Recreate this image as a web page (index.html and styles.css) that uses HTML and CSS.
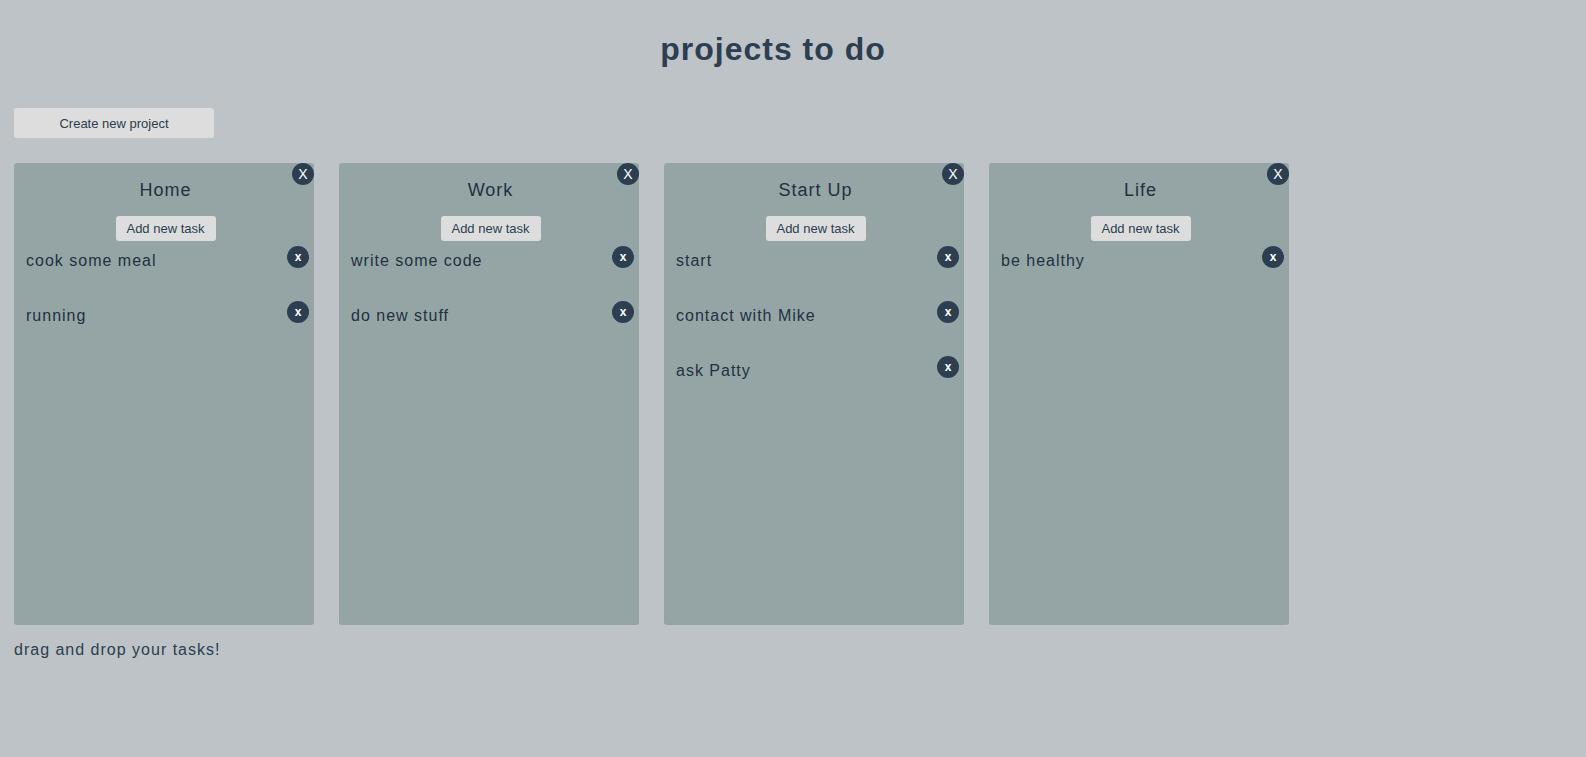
FILE: index.html
```html
<!DOCTYPE html>
<html lang="en">
<head>
<meta charset="utf-8">
<title>projects to do</title>
<link rel="stylesheet" href="styles.css">
</head>
<body>
<h1 class="title">projects to do</h1>
<main>
<button class="create">Create new project</button>
<div class="board">
<section class="column"><button class="close">X</button><h2 class="name">Home</h2><button class="add">Add new task</button>
<ul class="tasks"><li class="task">cook some meal<button class="remove">x</button></li><li class="task">running<button class="remove">x</button></li></ul></section>
<section class="column"><button class="close">X</button><h2 class="name">Work</h2><button class="add">Add new task</button>
<ul class="tasks"><li class="task">write some code<button class="remove">x</button></li><li class="task">do new stuff<button class="remove">x</button></li></ul></section>
<section class="column"><button class="close">X</button><h2 class="name">Start Up</h2><button class="add">Add new task</button>
<ul class="tasks"><li class="task">start<button class="remove">x</button></li><li class="task">contact with Mike<button class="remove">x</button></li><li class="task">ask Patty<button class="remove">x</button></li></ul></section>
<section class="column"><button class="close">X</button><h2 class="name">Life</h2><button class="add">Add new task</button>
<ul class="tasks"><li class="task">be healthy<button class="remove">x</button></li></ul></section>
</div>
<p class="hint">drag and drop your tasks!</p>
</main>
</body>
</html>
```
FILE: styles.css
```css
* { box-sizing: border-box; }
body {
  margin: 0;
  padding: 30px 14px;
  background: #bdc3c7;
  color: #2c3e50;
  font-family: "Liberation Sans", Arial, sans-serif;
  font-size: 16px;
  line-height: 20px;
  letter-spacing: 1px;
}
button {
  border: 0;
  padding: 0;
  font-family: inherit;
  color: #2c3e50;
  cursor: pointer;
}
.title {
  margin: 0 40px 40px 0;
  font-size: 32px;
  line-height: 38px;
  text-align: center;
}
.create, .add {
  background: #ddd;
  border-radius: 3px;
  font-size: 13px;
}
.create { display: block; width: 200px; height: 30px; }
.board { display: flex; flex-wrap: wrap; gap: 25px; margin-top: 25px; }
.column {
  position: relative;
  display: flex;
  flex-direction: column;
  align-items: center;
  width: 300px;
  min-height: 462px;
  padding: 17px 0 0 3px;
  background: #95a5a6;
  border-radius: 3px;
  color: #22313f;
}
.name { margin: 0 0 16px; font-size: 18px; font-weight: 400; line-height: 20px; }
.add { width: 100px; height: 25px; }
.tasks { align-self: stretch; margin: 5px 5px 0 9px; padding: 0; list-style: none; }
.task { display: flex; justify-content: space-between; height: 55px; line-height: 30px; }
.close, .remove {
  width: 22px;
  height: 22px;
  border-radius: 50%;
  background: #2c3e50;
  color: #fff;
}
.close { position: absolute; top: 0; right: 0; font-size: 14px; }
.remove { font-size: 12px; font-weight: 700; }
.hint { margin: 15px 0 0; }
```
